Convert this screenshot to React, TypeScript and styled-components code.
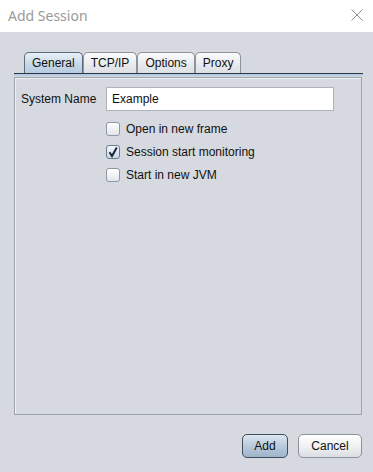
import React from "react";
import styled, { createGlobalStyle } from "styled-components";

const Global = createGlobalStyle`
  html, body { margin: 0; padding: 0; background: #d6d9df; }
  * { box-sizing: border-box; }
`;

const Window = styled.div`
  width: 373px;
  height: 472px;
  background: #d6d9df;
  display: flex;
  flex-direction: column;
  font-family: "Liberation Sans", Arial, sans-serif;
  font-size: 12px;
  color: #111;
`;

const TitleBar = styled.div`
  height: 32px;
  background: #ffffff;
  display: flex;
  align-items: center;
  justify-content: space-between;
  padding: 0 10px 2px 8px;
`;

const Title = styled.span`
  font-family: "Noto Sans", "Open Sans", sans-serif;
  font-size: 14px;
  color: #9a9a9a;
`;

const Body = styled.div`
  flex: 1;
  display: flex;
  flex-direction: column;
  padding: 20px 11px 0 14px;
`;

const TabStrip = styled.div`
  display: flex;
  padding-left: 10px;
  height: 22px;
  border-bottom: 1px solid #2a3645;
  margin-right: -1px;
`;

const Tab = styled.div<{ $active?: boolean }>`
  height: 21px;
  padding: 0 7px;
  margin-right: 0;
  display: flex;
  align-items: center;
  border: 1px solid ${(p) => (p.$active ? "#5b6b7d" : "#8b939d")};
  border-bottom: none;
  border-radius: 5px 5px 0 0;
  background: ${(p) =>
    p.$active
      ? "linear-gradient(#e9f0f7, #c5d6e7 60%, #b8cbe0)"
      : "linear-gradient(#fbfbfc, #e7e9ec 60%, #dcdfe4)"};
  color: #111;
`;

const Accent = styled.div`
  height: 2px;
  background: #b6cbe0;
  margin-right: -1px;
`;

const Panel = styled.div`
  margin-top: 1px;
  height: 338px;
  border: 1px solid #9da3ab;
  box-shadow: inset 1px 1px 0 #eef0f3;
  padding: 9px 6px;
  display: flex;
  flex-direction: column;
`;

const FormRow = styled.div`
  display: flex;
  align-items: center;
  gap: 8px;
`;

const Label = styled.span`
  width: 77px;
  white-space: nowrap;
`;

const TextField = styled.div`
  width: 228px;
  height: 24px;
  background: #ffffff;
  border: 1px solid #aeb3ba;
  padding: 0 5px;
  display: flex;
  align-items: center;
`;

const CheckList = styled.div`
  display: flex;
  flex-direction: column;
  margin: 6px 0 0 85px;
`;

const CheckRow = styled.div`
  display: flex;
  align-items: center;
  gap: 6px;
  height: 23px;
`;

const Box = styled.div<{ $checked?: boolean }>`
  width: 14px;
  height: 14px;
  border: 1px solid ${(p) => (p.$checked ? "#6b7c8e" : "#8e98a3")};
  border-radius: 3px;
  background: ${(p) =>
    p.$checked
      ? "linear-gradient(#f4f8fc, #c9d8e8)"
      : "linear-gradient(#ffffff, #e3e6ea)"};
  display: flex;
  align-items: center;
  justify-content: center;
`;

const ButtonRow = styled.div`
  display: flex;
  justify-content: flex-end;
  gap: 10px;
  margin-top: 19px;
`;

const Button = styled.div<{ $primary?: boolean; $w: number }>`
  width: ${(p) => p.$w}px;
  height: 24px;
  border-radius: 5px;
  border: 1px solid ${(p) => (p.$primary ? "#3f4d5c" : "#8a929c")};
  background: ${(p) =>
    p.$primary
      ? "linear-gradient(#dbe5ef, #b6c8da 55%, #9fb4c9)"
      : "linear-gradient(#ffffff, #eef0f2 55%, #dadde2)"};
  display: flex;
  align-items: center;
  justify-content: center;
  color: #111;
`;

const Check = () => (
  <svg width="12" height="12" viewBox="0 0 12 12">
    <path d="M2.5 6.2 L5 10 L9.8 1.5" fill="none" stroke="#1c2633" strokeWidth="2" strokeLinejoin="miter" />
  </svg>
);

const Close = () => (
  <svg width="12" height="12" viewBox="0 0 12 12">
    <path d="M0.5 0.5 L11.5 11.5 M11.5 0.5 L0.5 11.5" stroke="#8a8a8a" strokeWidth="1" />
  </svg>
);

const options = [
  { label: "Open in new frame", checked: false },
  { label: "Session start monitoring", checked: true },
  { label: "Start in new JVM", checked: false },
];

export default function App() {
  return (
    <>
      <Global />
      <Window>
        <TitleBar>
          <Title>Add Session</Title>
          <Close />
        </TitleBar>
        <Body>
          <TabStrip>
            <Tab $active>General</Tab>
            <Tab>TCP/IP</Tab>
            <Tab>Options</Tab>
            <Tab>Proxy</Tab>
          </TabStrip>
          <Accent />
          <Panel>
            <FormRow>
              <Label>System Name</Label>
              <TextField>Example</TextField>
            </FormRow>
            <CheckList>
              {options.map((o) => (
                <CheckRow key={o.label}>
                  <Box $checked={o.checked}>{o.checked && <Check />}</Box>
                  <span>{o.label}</span>
                </CheckRow>
              ))}
            </CheckList>
          </Panel>
          <ButtonRow>
            <Button $primary $w={46}>Add</Button>
            <Button $w={64}>Cancel</Button>
          </ButtonRow>
        </Body>
      </Window>
    </>
  );
}
